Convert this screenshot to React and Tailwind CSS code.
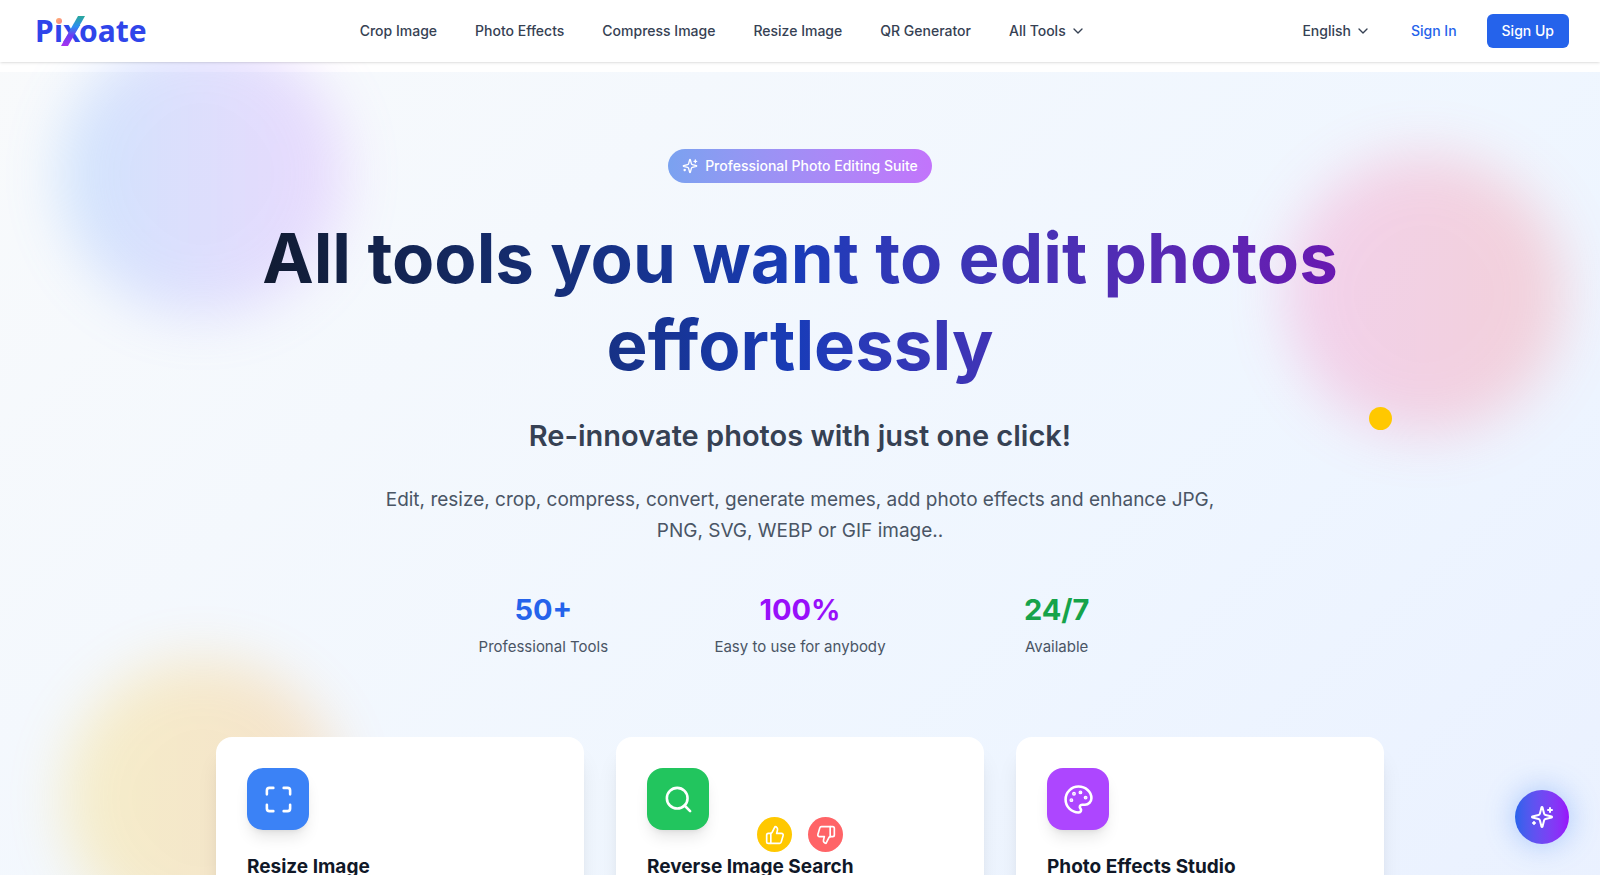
import {
  ChevronDown,
  Maximize,
  Palette,
  Search,
  ThumbsDown,
  ThumbsUp,
} from "lucide-react";

const navLinks = [
  "Crop Image",
  "Photo Effects",
  "Compress Image",
  "Resize Image",
  "QR Generator",
];

const stats = [
  { value: "50+", label: "Professional Tools", color: "text-[#2563eb]" },
  { value: "100%", label: "Easy to use for anybody", color: "text-purple-600" },
  { value: "24/7", label: "Available", color: "text-[#16a34a]" },
];

const tools = [
  { title: "Resize Image", icon: Maximize, color: "bg-[#3b82f6]" },
  { title: "Reverse Image Search", icon: Search, color: "bg-[#22c55e]" },
  { title: "Photo Effects Studio", icon: Palette, color: "bg-purple-500" },
];

function Logo() {
  return (
    <a href="#home" className="block">
      <svg width="124" height="44" viewBox="0 0 124 44" className="overflow-visible">
        <defs>
          <linearGradient id="slash" x1="0" y1="1" x2="0" y2="0">
            <stop offset="0" stopColor="#a832f0" />
            <stop offset="0.35" stopColor="#6b3df2" />
            <stop offset="0.65" stopColor="#2b8ef0" />
            <stop offset="1" stopColor="#2aa89a" />
          </linearGradient>
          <linearGradient id="dot" x1="0" y1="0" x2="1" y2="1">
            <stop offset="0" stopColor="#ffb070" />
            <stop offset="1" stopColor="#f77f86" />
          </linearGradient>
        </defs>
        <text
          y="33"
          x="4 23 32 48"
          fill="#2f45ea"
          fontFamily="'Noto Sans', sans-serif"
          fontWeight="700"
          fontSize="30"
        >
          Pıxoate
        </text>
        <circle cx="28" cy="12" r="3" fill="url(#dot)" />
        <path d="M30 37 47 7h7L37 37Z" fill="url(#slash)" />
      </svg>
    </a>
  );
}

function Navbar() {
  return (
    <header className="relative z-20 flex h-[62px] items-center justify-between bg-white px-[31px] text-sm font-medium text-gray-700 shadow-sm">
      <Logo />

      <nav className="flex items-center gap-[14px]">
        {navLinks.map((link) => (
          <a key={link} href="#tools" className="px-3 hover:text-blue-600">
            {link}
          </a>
        ))}
        <button className="flex items-center gap-1 px-3 hover:text-blue-600">
          All Tools
          <ChevronDown className="size-4" />
        </button>
      </nav>

      <div className="flex items-center">
        <button className="flex items-center gap-1 px-3 hover:text-blue-600">
          English
          <ChevronDown className="size-4" />
        </button>
        <a href="#signin" className="pr-[30px] pl-7 text-[#2563eb]">
          Sign In
        </a>
        <a href="#signup" className="rounded-md bg-[#2563eb] px-[15px] py-[7px] text-white">
          Sign Up
        </a>
      </div>
    </header>
  );
}

function Blobs() {
  return (
    <div className="pointer-events-none absolute inset-0">
      <div className="absolute -top-10 left-[60px] size-[284px] rounded-full bg-linear-to-r from-blue-400 to-purple-400 opacity-25 blur-[28px]" />
      <div className="absolute top-[82px] right-[36px] size-[280px] rounded-full bg-linear-to-r from-pink-400 to-red-400 opacity-25 blur-[28px]" />
      <div className="absolute top-[586px] left-[62px] size-[280px] rounded-full bg-linear-to-r from-yellow-400 to-orange-400 opacity-20 blur-[28px]" />
      <div className="absolute top-[335px] right-[208px] size-[23px] rounded-full bg-[#ffc800]" />
    </div>
  );
}

function Sparkles({ className }) {
  return (
    <svg
      viewBox="0 0 24 24"
      fill="none"
      stroke="currentColor"
      strokeWidth="2"
      strokeLinecap="round"
      strokeLinejoin="round"
      className={className}
    >
      <path d="M9.937 15.5A2 2 0 0 0 8.5 14.063l-6.135-1.582a.5.5 0 0 1 0-.962L8.5 9.936A2 2 0 0 0 9.937 8.5l1.582-6.135a.5.5 0 0 1 .963 0L14.063 8.5A2 2 0 0 0 15.5 9.937l6.135 1.581a.5.5 0 0 1 0 .964L15.5 14.063a2 2 0 0 0-1.437 1.437l-1.582 6.135a.5.5 0 0 1-.963 0z" />
      <path d="M20 3v4" />
      <path d="M22 5h-4" />
      <path d="M4 17v2" />
      <path d="M5 18H3" />
    </svg>
  );
}

function Hero() {
  return (
    <section className="relative flex flex-col items-center text-center">
      <div className="flex items-center gap-[7px] rounded-full bg-linear-to-r from-[#7aa2f0] to-[#c274fb] px-[14px] py-[7px] text-sm font-medium text-white">
        <Sparkles className="size-4" />
        Professional Photo Editing Suite
      </div>

      <h1 className="mt-8 w-full max-w-[1168px] bg-linear-to-r from-gray-900 via-blue-800 to-purple-800 bg-clip-text text-[69px] leading-[87px] font-bold text-transparent">
        All tools you want to edit photos effortlessly
      </h1>

      <h2 className="mt-[27px] text-[29px] leading-10 font-semibold text-gray-700">
        Re-innovate photos with just one click!
      </h2>

      <p className="mt-7 max-w-[864px] text-[19px] leading-[31px] text-gray-600">
        Edit, resize, crop, compress, convert, generate memes, add photo effects
        and enhance JPG, PNG, SVG, WEBP or GIF image..
      </p>

      <div className="mt-[46px] grid w-full max-w-[738px] grid-cols-3 gap-8">
        {stats.map((stat) => (
          <div key={stat.label}>
            <div className={`text-[29px] leading-9 font-bold ${stat.color}`}>{stat.value}</div>
            <div className="mt-[7px] text-[15px] leading-6 text-gray-600">{stat.label}</div>
          </div>
        ))}
      </div>
    </section>
  );
}

function ToolCard({ title, icon: Icon, color }) {
  return (
    <article className="h-80 rounded-2xl bg-white p-[31px] shadow-xl">
      <div className={`flex size-[62px] items-center justify-center rounded-2xl text-white shadow-lg ${color}`}>
        <Icon className="size-[31px]" />
      </div>
      <h3 className="mt-[23px] text-[19px] leading-7 font-bold text-gray-900">{title}</h3>
    </article>
  );
}

function App() {
  return (
    <div className="h-screen overflow-hidden bg-white font-['Inter',sans-serif]">
      <Navbar />

      <main className="relative mt-[10px] min-h-[1500px] bg-linear-to-br from-slate-50 via-blue-50 to-[#e6edff] px-8 pt-[77px]">
        <Blobs />
        <Hero />

        <div id="tools" className="relative mx-auto mt-[78px] grid max-w-[1168px] grid-cols-3 gap-8">
          {tools.map((tool) => (
            <ToolCard key={tool.title} {...tool} />
          ))}
        </div>
      </main>

      <div className="fixed bottom-[23px] left-1/2 z-30 flex -translate-x-1/2 gap-4 text-white">
        <button aria-label="Like" className="flex size-[35px] items-center justify-center rounded-full bg-[#ffc800]">
          <ThumbsUp className="size-5" />
        </button>
        <button aria-label="Dislike" className="flex size-[35px] items-center justify-center rounded-full bg-[#ff6467]">
          <ThumbsDown className="size-5" />
        </button>
      </div>

      <button
        aria-label="Assistant"
        className="fixed right-[31px] bottom-[31px] z-30 flex size-[54px] items-center justify-center rounded-full bg-linear-to-r from-[#2563eb] to-purple-600 text-white shadow-[0_0_30px_rgba(59,130,246,0.4)]"
      >
        <Sparkles className="size-6" />
      </button>
    </div>
  );
}

export default App;
